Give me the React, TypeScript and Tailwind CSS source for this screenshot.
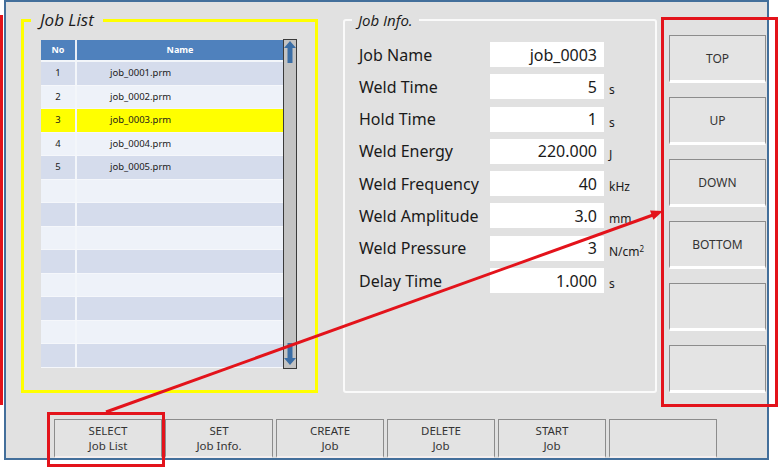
import React from "react";

const jobs = ["job_0001.prm", "job_0002.prm", "job_0003.prm", "job_0004.prm", "job_0005.prm"];

const infoRows: { label: string; value: string; unit?: React.ReactNode }[] = [
  { label: "Job Name", value: "job_0003" },
  { label: "Weld Time", value: "5", unit: "s" },
  { label: "Hold Time", value: "1", unit: "s" },
  { label: "Weld Energy", value: "220.000", unit: "J" },
  { label: "Weld Frequency", value: "40", unit: "kHz" },
  { label: "Weld Amplitude", value: "3.0", unit: "mm" },
  {
    label: "Weld Pressure",
    value: "3",
    unit: (
      <span>
        N/cm<sup className="text-[8px]">2</sup>
      </span>
    ),
  },
  { label: "Delay Time", value: "1.000", unit: "s" },
];

const sideButtons = ["TOP", "UP", "DOWN", "BOTTOM", "", ""];
const bottomButtons: [string, string][] = [
  ["SELECT", "Job List"],
  ["SET", "Job Info."],
  ["CREATE", "Job"],
  ["DELETE", "Job"],
  ["START", "Job"],
  ["", ""],
];

function UpArrow() {
  return (
    <svg width="12" height="22" viewBox="0 0 12 22">
      <polygon points="6,0 12,7 8.5,7 8.5,22 3.5,22 3.5,7 0,7" fill="#3b6ea6" />
    </svg>
  );
}

function DownArrow() {
  return (
    <svg width="12" height="22" viewBox="0 0 12 22">
      <polygon points="6,22 12,15 8.5,15 8.5,0 3.5,0 3.5,15 0,15" fill="#3b6ea6" />
    </svg>
  );
}

export default function App() {
  const rows = Array.from({ length: 13 }, (_, i) => i);
  return (
    <div className="relative w-[778px] h-[468px] overflow-hidden bg-white font-['Noto_Sans',sans-serif] text-[#1a1a1a]">
      <div className="ml-[4px] w-[765px] h-[460px] border-2 border-[#436f9b] bg-[#e1e1e1] flex flex-col">
        <div className="flex items-start pl-[15px] pt-[17px] h-[391px]">
          {/* Job List */}
          <div className="relative w-[297px] h-[374px] border-[3px] border-[#ffff00]">
            <span className="absolute left-[7px] top-[-12px] px-[9px] bg-[#e1e1e1] italic text-[17px] leading-[20px] font-['Open_Sans',sans-serif]">
              Job List
            </span>
            <div className="flex pl-[17px] pt-[18px]">
              <div className="w-[242px] flex flex-col">
                <div className="flex h-[20px] bg-[#4f81bd] text-white font-bold text-[9px] items-center">
                  <div className="w-[34px] text-center">No</div>
                  <div className="w-[2px] self-stretch bg-[#e9eef6]" />
                  <div className="flex-1 text-center">Name</div>
                </div>
                <div className="h-[2px] bg-[#f3f6fa]" />
                {rows.map((i) => {
                  const bg = i === 2 ? "bg-[#ffff00]" : i % 2 === 0 ? "bg-[#d5dcec]" : "bg-[#eef2f9]";
                  return (
                    <div key={i} className={`flex h-[23.5px] items-center text-[9.5px] border-b border-[#f5f7fb] ${bg}`}>
                      <div className="w-[34px] text-center">{i < 5 ? i + 1 : ""}</div>
                      <div className="w-[2px] self-stretch bg-[#f3f6fa]" />
                      <div className="flex-1 pl-[33px]">{i < 5 ? jobs[i] : ""}</div>
                    </div>
                  );
                })}
              </div>
              <div className="w-[14px] h-[330px] -mt-[1px] bg-[#c3c3c3] border border-[#3a3a3a] flex flex-col items-center justify-between py-[1px]">
                <UpArrow />
                <div className="mb-[2px]">
                  <DownArrow />
                </div>
              </div>
            </div>
          </div>

          {/* Job Info */}
          <div className="relative ml-[25px] w-[314px] h-[374px] border-2 border-[#fafafa] rounded-[3px]">
            <span className="absolute left-[7px] top-[-11px] px-[6px] bg-[#e1e1e1] italic text-[15px] leading-[20px] font-['Open_Sans',sans-serif]">
              Job Info.
            </span>
            <div className="flex flex-col gap-[7.3px] pl-[14px] pt-[21px]">
              {infoRows.map((r) => (
                <div key={r.label} className="flex items-stretch h-[25px]">
                  <div className="w-[131px] flex items-center text-[16px] leading-none">{r.label}</div>
                  <div className="w-[114px] bg-white flex items-center justify-end pr-[7px] text-[16px] leading-none">
                    {r.value}
                  </div>
                  <div className="ml-[5px] flex items-end pb-[3px] text-[12px] leading-none">{r.unit}</div>
                </div>
              ))}
            </div>
          </div>

          {/* Side buttons */}
          <div className="ml-[12px] mt-[16px] w-[97px] flex flex-col gap-[14px]">
            {sideButtons.map((b, i) => (
              <div
                key={i}
                className="h-[48px] bg-[#e4e4e4] border-t border-l border-r border-[#8c8c8c] border-b-[3px] border-b-white flex items-center justify-center pt-[2px] text-[12px] text-[#333]"
              >
                {b}
              </div>
            ))}
          </div>
        </div>

        {/* Bottom buttons */}
        <div className="mt-[26px] pl-[48px] flex gap-[3px] h-[39px]">
          {bottomButtons.map(([a, b], i) => (
            <div
              key={i}
              className="w-[108px] h-full bg-[#e3e3e3] border-t border-l border-r border-[#8c8c8c] border-b-2 border-b-[#f4eeee] flex flex-col items-center justify-center text-[11.5px] leading-[15px] text-[#333]"
            >
              <div className="h-[15px]">{a}</div>
              <div className="h-[15px]">{b}</div>
            </div>
          ))}
        </div>
      </div>

      {/* Annotations */}
      <div className="absolute left-[-100px] top-[15px] w-[103px] h-[390px] border-[3px] border-[#e3131b]" />
      <div className="absolute left-[661px] top-[17px] w-[117px] h-[390px] border-[3px] border-[#e3131b]" />
      <div className="absolute left-[47px] top-[412px] w-[118px] h-[55px] border-[3px] border-[#e3131b]" />
      <svg className="absolute left-0 top-0 pointer-events-none" width="778" height="468" viewBox="0 0 778 468">
        <line x1="106" y1="412" x2="653" y2="215" stroke="#e3131b" strokeWidth="3" />
        <polygon points="663,211 653.4,219.8 650,210.4" fill="#e3131b" />
      </svg>
    </div>
  );
}
